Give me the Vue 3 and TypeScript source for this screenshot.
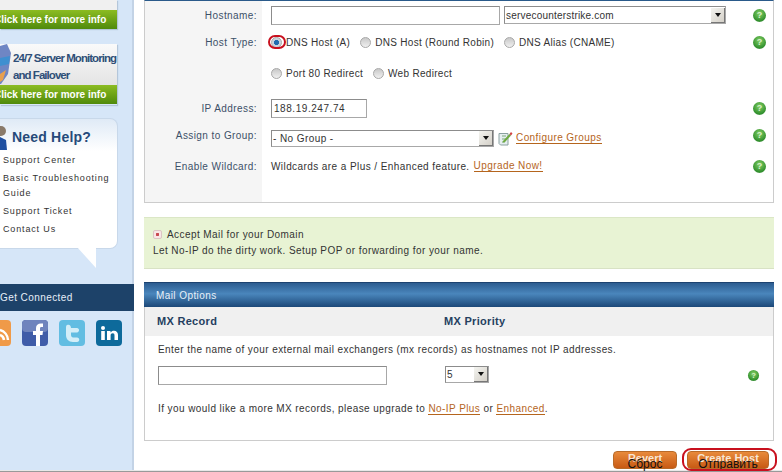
<template>
  <div class="page">
    <aside class="sidebar">
      <div class="banner banner-top">
        <div class="banner-body"></div>
        <div class="banner-cta">Click here for more info</div>
      </div>
      <div class="banner banner-monitor">
        <div class="banner-body">
          <svg class="barrel" width="12" height="40" viewBox="0 0 12 40">
            <path d="M0 2 L7 0 L11 9 L8 30 L1 40 L0 40Z" fill="#6f86c4" />
            <path d="M0 14 L10 12 L9 20 L0 22Z" fill="#3f8fd0" />
            <path d="M0 30 L6 26 L3 36 L0 38Z" fill="#e8a050" />
          </svg>
          <p class="banner-title">24/7 Server Monitoring<br />and Failover</p>
        </div>
        <div class="banner-cta">Click here for more info</div>
      </div>
      <div class="help">
        <div class="help-head">
          <svg width="8" height="26" viewBox="0 0 8 26">
            <circle cx="1" cy="7" r="5" fill="#8a7a6a" />
            <path d="M0 13 L6 16 L7 26 L0 26Z" fill="#1f4fa0" />
          </svg>
          <span>Need Help?</span>
        </div>
        <a v-for="link in helpLinks" :key="link" class="help-link">{{ link }}</a>
        <div class="help-tail"></div>
      </div>
      <div class="connected">Get Connected</div>
      <div class="social">
        <svg class="rss" width="11" height="26" viewBox="0 0 11 26">
          <rect x="-16" width="27" height="26" rx="4" fill="#f09a48" />
          <path d="M0 10 A11 11 0 0 1 8 20 M0 15 A6 6 0 0 1 4 20" stroke="#fff" stroke-width="2.5" fill="none" />
        </svg>
        <svg width="26" height="26" viewBox="0 0 26 26">
          <rect width="26" height="26" rx="4" fill="#3f5ca8" />
          <rect width="26" height="12" rx="4" fill="#6f84bd" />
          <path d="M14 26 V15 H11 V11 H14 V8 C14 5 16 3.500 19 3.500 H21 V7 H19.500 C18.300 7 18 7.600 18 8.700 V11 H21 L20.500 15 H18 V26Z" fill="#fff" />
        </svg>
        <svg width="26" height="26" viewBox="0 0 26 26">
          <rect width="26" height="26" rx="4" fill="#62bde2" />
          <path d="M8 5 C10.500 4 12 5.500 12 8 H18 C20.500 8 21 12 18 12.500 H12 V15 C12 17 13.500 17.500 15 17.500 H18 C21 17.500 21 22 18 22 H14 C9.500 22 7 19 7 15 V8 C7 6.500 7 5.500 8 5Z" fill="#d3eef8" />
        </svg>
        <svg width="26" height="26" viewBox="0 0 26 26">
          <rect width="26" height="26" rx="4" fill="#0d6a9b" />
          <circle cx="7" cy="8" r="2" fill="#fff" />
          <path d="M5.200 11 H8.800 V20 H5.200Z M11 11 H14.500 V12.500 C15.500 11 17 10.700 18 10.700 C20.500 10.700 22 12.300 22 15 V20 H18.500 V15.500 C18.500 14 18 13.300 16.800 13.300 C15.400 13.300 14.600 14.200 14.600 15.500 V20 H11Z" fill="#fff" />
        </svg>
      </div>
    </aside>

    <main class="main">
      <section class="panel host-panel">
        <div class="form-row row-hostname">
          <label class="form-label">Hostname:</label>
          <div class="form-field">
            <input class="text-input hostname-input" />
            <div class="fake-select domain-select">
              <span>servecounterstrike.com</span>
              <i class="select-btn"><b></b></i>
            </div>
          </div>
          <span class="help-dot">?</span>
        </div>
        <div class="form-row row-type">
          <label class="form-label">Host Type:</label>
          <div class="form-field radios">
            <span class="radio"><i class="radio-dot on"></i>DNS Host (A)<em class="radio-ring"></em></span>
            <span class="radio"><i class="radio-dot"></i>DNS Host (Round Robin)</span>
            <span class="radio"><i class="radio-dot"></i>DNS Alias (CNAME)</span>
          </div>
          <span class="help-dot">?</span>
        </div>
        <div class="form-row row-redirect">
          <div class="form-label"></div>
          <div class="form-field radios">
            <span class="radio"><i class="radio-dot"></i>Port 80 Redirect</span>
            <span class="radio"><i class="radio-dot"></i>Web Redirect</span>
          </div>
        </div>
        <div class="form-row row-ip">
          <label class="form-label">IP Address:</label>
          <div class="form-field">
            <input class="text-input ip-input" value="188.19.247.74" />
          </div>
          <span class="help-dot">?</span>
        </div>
        <div class="form-row row-group">
          <label class="form-label">Assign to Group:</label>
          <div class="form-field">
            <div class="fake-select group-select">
              <span>- No Group -</span>
              <i class="select-btn"><b></b></i>
            </div>
            <svg class="edit-icon" width="15" height="15" viewBox="0 0 15 15">
              <path d="M1 2.500 H10 V14 H2.500 L1 12.500Z" fill="#e6eef0" stroke="#8aa0a0" />
              <path d="M4 5 H8 M4 8 H8 M4 11 H7" stroke="#7aa97a" />
              <path d="M5 10 L11.500 3 L13 4.500 L7 11 L4.800 11.500Z" fill="#6eaa40" />
              <path d="M11.500 3 L13 1 L14.500 2.500 L13 4.500Z" fill="#d24040" />
            </svg>
            <a class="link">Configure Groups</a>
          </div>
          <span class="help-dot">?</span>
        </div>
        <div class="form-row row-wildcard">
          <label class="form-label">Enable Wildcard:</label>
          <div class="form-field">
            <span>Wildcards are a Plus / Enhanced feature.</span>
            <a class="link upgrade">Upgrade Now!</a>
          </div>
          <span class="help-dot">?</span>
        </div>
        <div class="form-row row-end">
          <div class="form-label"></div>
        </div>
      </section>

      <section class="accept-box">
        <div class="accept-title">
          <i class="plus-box"></i>
          <span>Accept Mail for your Domain</span>
        </div>
        <p>Let No-IP do the dirty work. Setup POP or forwarding for your name.</p>
      </section>

      <section class="panel mail-panel">
        <header class="mail-head">Mail Options</header>
        <div class="mx-head">
          <span class="mx-record">MX Record</span>
          <span>MX Priority</span>
        </div>
        <div class="mail-body">
          <p class="mx-note">Enter the name of your external mail exchangers (mx records) as hostnames not IP addresses.</p>
          <div class="mx-row">
            <input class="text-input mx-input" />
            <div class="fake-select priority-select">
              <span>5</span>
              <i class="select-btn"><b></b></i>
            </div>
            <span class="help-dot">?</span>
          </div>
          <p class="mx-upgrade">
            If you would like a more MX records, please upgrade to
            <a class="link">No-IP Plus</a> or <a class="link">Enhanced</a>.
          </p>
        </div>
      </section>

      <div class="actions">
        <button class="action-btn revert">Revert<span class="btn-over">Сброс</span></button>
        <button class="action-btn create">Create Host<span class="btn-over">Отправить</span><em class="btn-ring"></em></button>
      </div>
    </main>
    <div class="footer-rule"></div>
  </div>
</template>

<script setup lang="ts">
const helpLinks: string[] = [
  'Support Center',
  'Basic Troubleshooting Guide',
  'Support Ticket',
  'Contact Us',
];
</script>

<style>
html,
body {
  margin: 0;
  overflow: hidden;
  background: #fff;
}
</style>

<style scoped>
.page {
  width: 782px;
  height: 472px;
  display: grid;
  grid-template-columns: 134px minmax(0, 1fr);
  grid-template-rows: 470px 2px;
  overflow: hidden;
  font-family: 'Liberation Sans', Arial, sans-serif;
  font-size: 10px;
  letter-spacing: 0.42px;
  color: #333;
}

/* sidebar */
.sidebar {
  background: linear-gradient(90deg, #d6e6f8 132px, #c3d3e6 132px);
  overflow: hidden;
  display: flex;
  flex-direction: column;
}

.banner {
  width: 117px;
  display: flex;
  flex-direction: column;
  box-shadow: 1px 1px 1px #b4c6da;
}

.banner-top {
  height: 29px;
  margin-bottom: 15px;
}

.banner-top .banner-body {
  height: 10px;
  background: #f0f0f0;
}

.banner-monitor {
  height: 61px;
  margin-bottom: 13px;
}

.banner-monitor .banner-body {
  height: 41px;
  background: linear-gradient(#fafafa, #e4e4e4);
  display: flex;
  align-items: flex-start;
  gap: 1px;
}

.barrel {
  flex: none;
}

.banner-title {
  margin: 6px 0 0;
  font-size: 11.500px;
  line-height: 17px;
  font-weight: bold;
  letter-spacing: -0.95px;
  color: #2f4f78;
  white-space: nowrap;
}

.banner-cta {
  height: 19px;
  line-height: 19px;
  background: linear-gradient(#8cbc22, #4f8a0c);
  color: #fff;
  font-size: 10px;
  font-weight: bold;
  letter-spacing: 0;
  white-space: nowrap;
  text-indent: -6px;
  overflow: hidden;
}

.help {
  position: relative;
  box-sizing: border-box;
  width: 118px;
  height: 131px;
  margin-bottom: 35px;
  padding-left: 3px;
  background: linear-gradient(#dfeaf6, #fff 32px);
  border: 1px solid #c8d8ea;
  border-left: 0;
  border-radius: 0 8px 8px 0;
  display: flex;
  flex-direction: column;
}

.help-head {
  box-sizing: border-box;
  display: flex;
  align-items: center;
  gap: 1px;
  height: 34px;
  padding-top: 2px;
  margin-left: -3px;
  color: #264a7a;
  font-size: 14px;
  letter-spacing: 0.2px;
  font-weight: bold;
}

.help-head span {
  margin-left: 3px;
}

.help-link {
  font-size: 9px;
  line-height: 15px;
  margin-bottom: 3px;
  letter-spacing: 0.85px;
  color: #333;
}

.help-tail {
  position: absolute;
  right: 21px;
  bottom: -20px;
  width: 19px;
  height: 21px;
  background: #fff;
  clip-path: polygon(0 0, 100% 0, 100% 100%);
}

.connected {
  height: 27px;
  line-height: 27px;
  background: #1d4269;
  color: #e6eef8;
}

.social {
  margin-top: 9px;
  display: flex;
  gap: 11px;
}

/* main column */
.main {
  padding: 0 8px 0 10px;
  display: flex;
  flex-direction: column;
  min-width: 0;
}

.panel {
  box-sizing: border-box;
  border: 1px solid #ccc;
}

.host-panel {
  border-top: 1px solid #2a5a8a;
  height: 203px;
  display: flex;
  flex-direction: column;
}

.form-row {
  display: flex;
  align-items: center;
}

.form-label {
  flex: none;
  align-self: stretch;
  box-sizing: border-box;
  width: 117px;
  padding-right: 5px;
  background: #f5f5f5;
  color: #3c5068;
  display: flex;
  align-items: center;
  justify-content: flex-end;
}

.form-field {
  flex: 1;
  padding-left: 9px;
  display: flex;
  align-items: center;
  min-width: 0;
}

.row-hostname { height: 28px; }
.row-type { height: 26px; }
.row-redirect { height: 36px; }
.row-ip { height: 34px; }
.row-group { height: 26px; }
.row-group .form-label { padding-bottom: 6px; }
.row-group .help-dot { margin-top: -6px; }
.row-wildcard { height: 30px; }
.row-end { flex: 1; }

.text-input {
  box-sizing: border-box;
  padding: 0 2px;
  border: 1px solid #a8a8a8;
  border-top-color: #8c8c8c;
  border-left-color: #8c8c8c;
  background: #fff;
  font: inherit;
  letter-spacing: inherit;
  color: #333;
  outline: none;
}

.hostname-input {
  width: 229px;
  height: 19px;
}

.ip-input {
  width: 96px;
  height: 19px;
  letter-spacing: 0.55px;
}

.fake-select {
  box-sizing: border-box;
  display: flex;
  align-items: center;
  justify-content: space-between;
  padding-left: 1px;
  border: 1px solid #a8a8a8;
  border-top-color: #8c8c8c;
  border-left-color: #8c8c8c;
  background: #fff;
}

.domain-select {
  width: 222px;
  height: 18px;
  margin-left: 4px;
  letter-spacing: 0.2px;
}

.group-select {
  width: 223px;
  height: 17px;
}

.priority-select {
  width: 44px;
  height: 17px;
  margin-left: 58px;
}

.select-btn {
  flex: none;
  box-sizing: border-box;
  width: 14px;
  height: 15px;
  background: linear-gradient(135deg, #f4f4f0, #d4d0c8);
  border-right: 1px solid #777;
  border-bottom: 1px solid #777;
  display: flex;
  align-items: center;
  justify-content: center;
}

.select-btn b {
  width: 0;
  height: 0;
  border: 3.500px solid transparent;
  border-top: 4px solid #111;
  border-bottom: 0;
}

.help-dot {
  flex: none;
  box-sizing: border-box;
  width: 13px;
  height: 13px;
  margin-right: 7px;
  border-radius: 50%;
  background: radial-gradient(circle at 50% 35%, #86d066, #2f8f2c 70%, #9cb49c);
  color: #d8f0c8;
  font-size: 9px;
  font-weight: bold;
  letter-spacing: 0;
  line-height: 13px;
  text-align: center;
}

.radios {
  gap: 10px;
  letter-spacing: 0.3px;
}

.radio {
  position: relative;
  display: inline-flex;
  align-items: center;
  gap: 4px;
}

.radio-dot {
  flex: none;
  box-sizing: border-box;
  width: 11px;
  height: 11px;
  border-radius: 50%;
  border: 1px solid #a8a8a8;
  background: linear-gradient(#c8c8c8, #f0f0f0);
}

.radio-dot.on {
  background: radial-gradient(circle, #1f6cb0 38%, #c8d4de 45%);
}

.radio-ring {
  position: absolute;
  left: -3px;
  top: 50%;
  width: 14px;
  height: 10px;
  transform: translateY(-50%);
  border: 2px solid #c8101e;
  border-radius: 7px;
}

.edit-icon {
  margin-left: 4px;
}

.link {
  color: #b5651d;
  border-bottom: 1px solid #b5651d;
  line-height: 11px;
}

.row-group .link {
  margin-left: 3px;
}

.upgrade {
  margin-left: 4px;
}

.accept-box {
  box-sizing: border-box;
  height: 52px;
  margin-top: 14px;
  padding: 9px 8px 0 9px;
  background: #e8f3d4;
  border-top: 1px solid #dbe7c6;
  border-bottom: 1px solid #d8e2c4;
}

.accept-title {
  display: flex;
  align-items: center;
  gap: 5px;
  height: 14px;
}

.plus-box {
  box-sizing: border-box;
  width: 9px;
  height: 9px;
  border: 1px solid #dcc4c4;
  border-radius: 2px;
  background: radial-gradient(circle, #c84850 28%, #f8e6e6 34%);
}

.accept-box p {
  margin: 4px 0 0;
  line-height: 12px;
}

.mail-panel {
  height: 159px;
  margin-top: 13px;
  border-top: 0;
}

.mail-head {
  height: 25px;
  margin: 0 -1px;
  padding-left: 12px;
  line-height: 25px;
  background: linear-gradient(#2c5c90, #4a86bc 45%, #1c4878);
  border-top: 1px solid #1c4270;
  box-sizing: border-box;
  color: #e8f0f8;
}

.mx-head {
  box-sizing: border-box;
  height: 29px;
  padding: 0 0 2px 12px;
  display: flex;
  align-items: center;
  background: #f0f0f0;
  color: #253f60;
  font-size: 11px;
  font-weight: bold;
  letter-spacing: 0.3px;
}

.mx-record {
  width: 287px;
}

.mail-body {
  padding: 0 13px;
}

.mx-note {
  margin: 8px 0 0;
  line-height: 12px;
}

.mx-row {
  display: flex;
  align-items: flex-start;
  height: 22px;
  margin-top: 10px;
}

.mx-input {
  width: 229px;
  height: 19px;
}

.mx-row .help-dot {
  margin: 3px 0 0 auto;
  transform: scale(0.85);
}

.mx-upgrade {
  margin: 15px 0 0;
  line-height: 12px;
}

.actions {
  display: flex;
  justify-content: flex-end;
  gap: 10px;
  margin-top: 10px;
  padding-right: 5px;
}

.action-btn {
  position: relative;
  box-sizing: border-box;
  height: 18px;
  padding: 0 0 5px;
  border: 1px solid #b86a28;
  border-radius: 4px;
  background: linear-gradient(#e88a3c, #c85a14);
  color: #f8e6d4;
  font-family: inherit;
  font-size: 11px;
  font-weight: bold;
  letter-spacing: 0;
}

.revert {
  width: 64px;
}

.create {
  width: 82px;
}

.btn-over {
  position: absolute;
  left: 0;
  right: 0;
  top: 5px;
  color: #111;
  font-size: 12px;
  font-weight: normal;
  text-align: center;
  white-space: nowrap;
}

.btn-ring {
  position: absolute;
  left: -6px;
  top: -4px;
  width: 91px;
  height: 19px;
  border: 2px solid #c8101e;
  border-radius: 9px;
}

.footer-rule {
  grid-column: 1 / -1;
  background: #999;
  border-top: 1px solid #e8e8e8;
}
</style>
